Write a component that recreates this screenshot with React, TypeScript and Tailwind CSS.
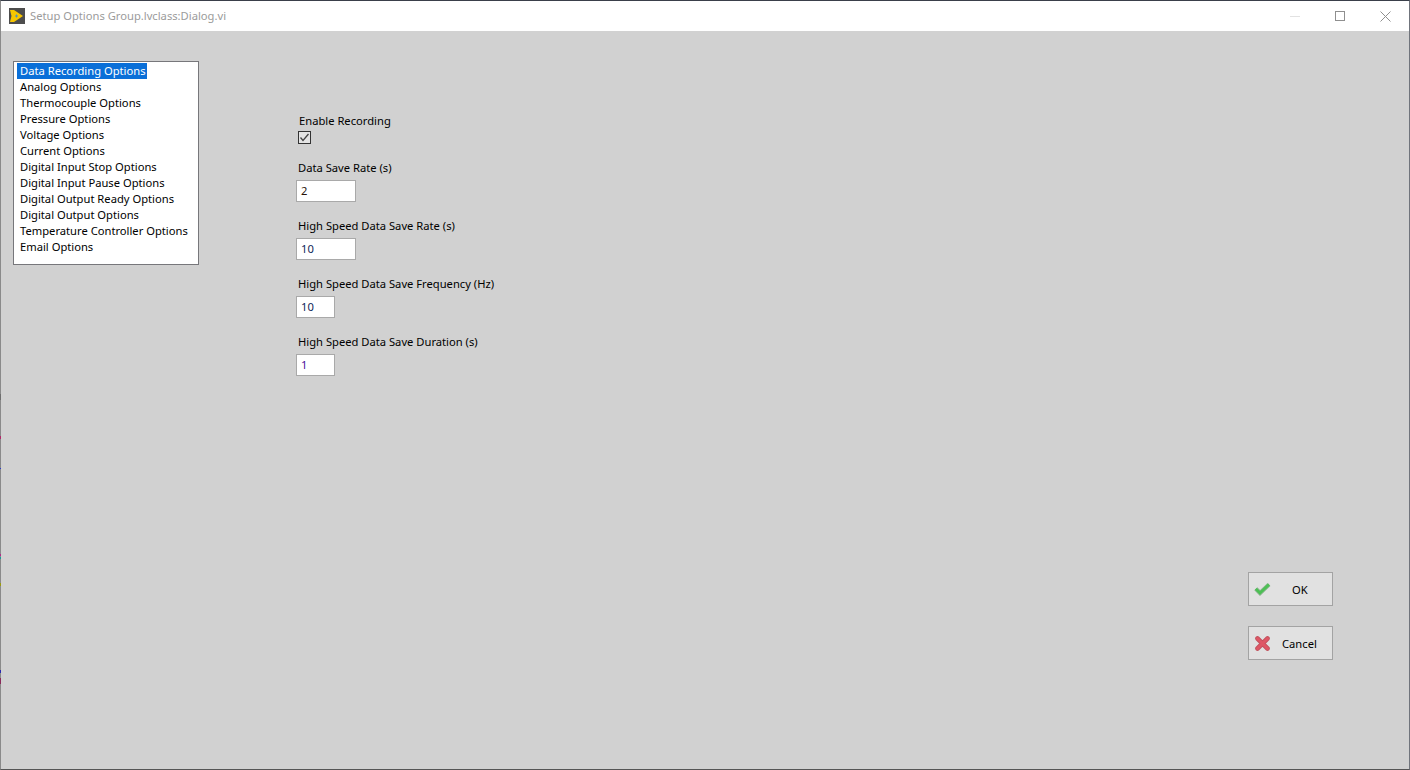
const options = [
  "Data Recording Options",
  "Analog Options",
  "Thermocouple Options",
  "Pressure Options",
  "Voltage Options",
  "Current Options",
  "Digital Input Stop Options",
  "Digital Input Pause Options",
  "Digital Output Ready Options",
  "Digital Output Options",
  "Temperature Controller Options",
  "Email Options",
];

const fields = [
  { label: "Data Save Rate (s)", value: "2", width: "w-[60px]", color: "text-[#2a1208]" },
  { label: "High Speed Data Save Rate (s)", value: "10", width: "w-[60px]", color: "text-[#0c2458]" },
  { label: "High Speed Data Save Frequency (Hz)", value: "10", width: "w-[39px]", color: "text-[#0c2458]" },
  { label: "High Speed Data Save Duration (s)", value: "1", width: "w-[39px]", color: "text-[#4b0f9a]" },
];

// stray pixels along the left window edge, from the window behind
const edgeSpecks = [
  { top: 394, height: 6, color: "#6e6e6e" },
  { top: 436, height: 3, color: "#b02a6a" },
  { top: 468, height: 1, color: "#2a3ad0" },
  { top: 554, height: 2, color: "#b02a8a" },
  { top: 557, height: 2, color: "#1a9a9a" },
  { top: 583, height: 3, color: "#9a9a10" },
  { top: 670, height: 3, color: "#2a2ab0" },
  { top: 678, height: 6, color: "#8a2a5a" },
];

function AppIcon() {
  return (
    <svg width="16" height="16" viewBox="0 0 16 16" className="ml-[8px] mr-[5px]">
      <rect width="16" height="16" fill="#4d4d4d" />
      <path d="M1 2h4l9 6-9 6H1l1.5-6z" fill="#f7c600" />
      <path d="M6 7.5h1V6.5h1v1h1v1H8v1H7v-1H6z" fill="#4f8fc0" />
    </svg>
  );
}

function CheckIcon() {
  return (
    <svg width="17" height="14" viewBox="0 0 17 14">
      <path d="M1.8 6.8 L6 11 L15 2.5" fill="none" stroke="#86b489" strokeWidth="4.2" />
      <path d="M1.8 6.8 L6 11 L15 2.5" fill="none" stroke="#4cc054" strokeWidth="2.6" />
    </svg>
  );
}

function CrossIcon() {
  return (
    <svg width="15" height="15" viewBox="0 0 15 15">
      <path d="M2.5 2.5 L12.5 12.5 M12.5 2.5 L2.5 12.5" fill="none" stroke="#c2505c" strokeWidth="4.6" strokeLinecap="round" />
      <path d="M2.5 2.5 L12.5 12.5 M12.5 2.5 L2.5 12.5" fill="none" stroke="#de5766" strokeWidth="3" strokeLinecap="round" />
    </svg>
  );
}

export default function App() {
  return (
    <div className="relative flex h-[770px] w-[1410px] flex-col border border-t-[#3a3f4a] border-r-[#70747c] border-b-[#555] border-l-[#8a8a8a] bg-[#d1d1d1] font-['Noto_Sans',sans-serif] text-[11.2px] leading-4 text-black">
      {edgeSpecks.map((speck) => (
        <span
          key={speck.top}
          className="absolute left-[-1px] w-px"
          style={{ top: speck.top - 1, height: speck.height, backgroundColor: speck.color }}
        />
      ))}

      <header className="flex h-[30px] shrink-0 items-center bg-white">
        <AppIcon />
        <span className="text-[#9b9b9b]">Setup Options Group.lvclass:Dialog.vi</span>
        <div className="ml-auto flex items-center">
          <span className="h-px w-[10px] bg-[#e2e2e2]" />
          <span className="ml-[35px] h-[10px] w-[10px] border border-[#8f8f8f]" />
          <svg width="11" height="11" viewBox="0 0 11 11" className="ml-[35px] mr-[18px]">
            <path d="M.5.5l10 10M10.5.5l-10 10" stroke="#8f8f8f" fill="none" />
          </svg>
        </div>
      </header>

      <main className="flex flex-1 pl-3 pr-[76px] pt-[30px]">
        <ul className="h-[204px] w-[186px] shrink-0 border border-[#77777b] bg-white pl-[3px] pt-[1px]">
          {options.map((option, index) => (
            <li key={option} className="h-4 pl-[3px]">
              <span className={index === 0 ? "-ml-[3px] inline-block bg-[#0a6fd8] pl-[3px] pr-px text-white" : ""}>{option}</span>
            </li>
          ))}
        </ul>

        <section className="ml-[97px] flex flex-col pt-[51px]">
          <label className="ml-[3px] flex h-4 translate-y-px items-center">Enable Recording</label>
          <span className="ml-[2px] mt-[3px] flex h-[13px] w-[13px] items-center justify-center border border-[#333] bg-[#e4e4e4]">
            <svg width="11" height="11" viewBox="0 0 11 11">
              <path d="M1.5 5.5l2.5 3 5.5-6.5" stroke="#444" strokeWidth="1.3" fill="none" />
            </svg>
          </span>
          {fields.map((field) => (
            <div key={field.label} className="mt-4">
              <div className="ml-[2px] h-4 leading-4">{field.label}</div>
              <div className={`mt-1 flex h-[22px] items-center border border-[#a9a9a9] bg-white pl-[4px] ${field.width} ${field.color}`}>
                {field.value}
              </div>
            </div>
          ))}
        </section>

        <aside className="ml-auto flex flex-col gap-5 pt-[511px]">
          <button className="flex h-[34px] w-[85px] items-center border border-[#a3a3a3] bg-[#e1e1e1] pl-[5px]">
            <CheckIcon />
            <span className="ml-[21px] translate-y-px">OK</span>
          </button>
          <button className="flex h-[34px] w-[85px] items-center border border-[#a3a3a3] bg-[#e1e1e1] pl-[6px]">
            <CrossIcon />
            <span className="ml-[12px] translate-y-px">Cancel</span>
          </button>
        </aside>
      </main>
    </div>
  );
}
